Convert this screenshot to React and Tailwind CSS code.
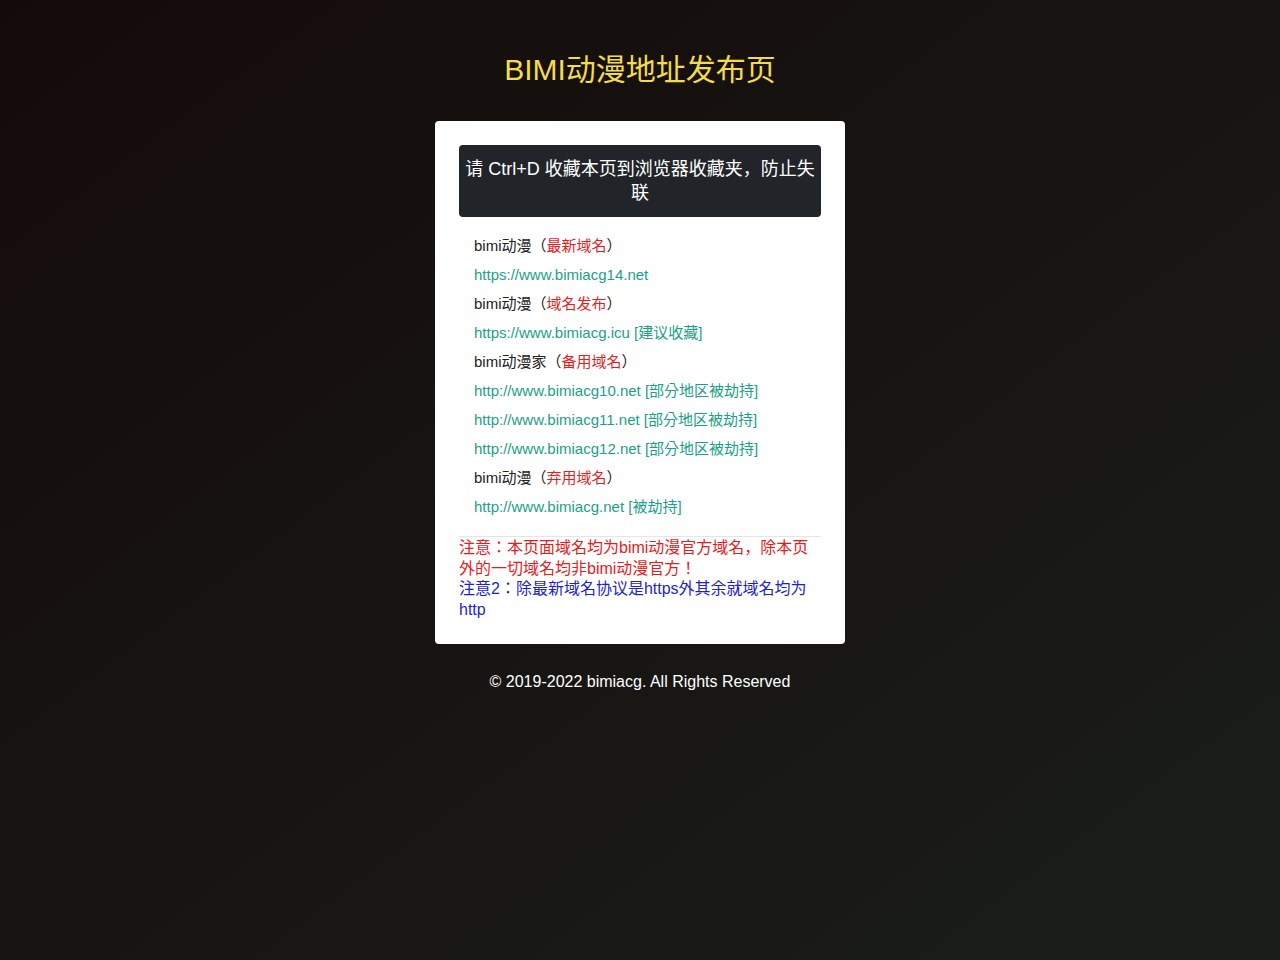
import React from 'react';

const font = { fontFamily: '"Liberation Sans", "Noto Sans CJK KR", sans-serif' };

const rows = [
  { kind: 'label', name: 'bimi动漫', tag: '最新域名' },
  { kind: 'link', url: 'https://www.bimiacg14.net' },
  { kind: 'label', name: 'bimi动漫', tag: '域名发布' },
  { kind: 'link', url: 'https://www.bimiacg.icu', note: '[建议收藏]' },
  { kind: 'label', name: 'bimi动漫家', tag: '备用域名' },
  { kind: 'link', url: 'http://www.bimiacg10.net', note: '[部分地区被劫持]' },
  { kind: 'link', url: 'http://www.bimiacg11.net', note: '[部分地区被劫持]' },
  { kind: 'link', url: 'http://www.bimiacg12.net', note: '[部分地区被劫持]' },
  { kind: 'label', name: 'bimi动漫', tag: '弃用域名' },
  { kind: 'link', url: 'http://www.bimiacg.net', note: '[被劫持]' },
];

export default function App() {
  return (
    <div
      className="min-h-[960px] w-full bg-gradient-to-br from-[#130b09] to-[#1a1e1b] flex flex-col items-center [text-spacing-trim:space-all]"
      style={font}
    >
      <h1 className="mt-[50px] text-[30px] leading-[40px] text-[#f3dc4a] font-normal">BIMI动漫地址发布页</h1>

      <div className="mt-[31px] w-[410px] bg-white rounded-[4px] p-6">
        <div className="bg-[#212529] rounded-[4px] px-1 py-3 text-white text-[18px] leading-[24px] text-center">
          请 Ctrl+D 收藏本页到浏览器收藏夹，防止失联
        </div>

        <ul className="mt-[14px] pl-[15px] text-[15px] leading-[21px]">
          {rows.map((r, i) => (
            <li key={i} className="py-1">
              {r.kind === 'label' ? (
                <span className="text-[#222]">
                  {r.name}（<span className="text-[#e81c1c]">{r.tag}</span>）
                </span>
              ) : (
                <a className="text-[#1ba187]">
                  {r.url}
                  {r.note ? ' ' + r.note : ''}
                </a>
              )}
            </li>
          ))}
        </ul>

        <div className="mt-[15px] border-t border-[#e5e5e5] pt-[1px] text-[16px] leading-[20.5px]">
          <p className="text-[#e81c1c]">注意：本页面域名均为bimi动漫官方域名，除本页外的一切域名均非bimi动漫官方！</p>
          <p className="text-[#1f1fcf]">注意2：除最新域名协议是https外其余就域名均为http</p>
        </div>
      </div>

      <p className="mt-[26px] text-white text-[16px] leading-[24px]">© 2019-2022 bimiacg. All Rights Reserved</p>
    </div>
  );
}
